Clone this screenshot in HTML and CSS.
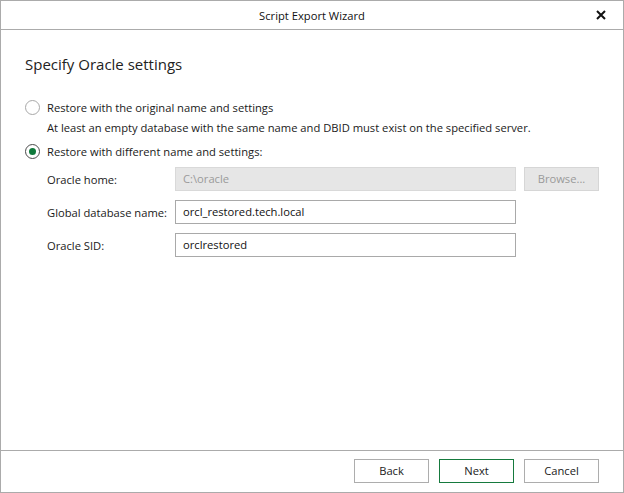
FILE: index.html
```html
<!DOCTYPE html>
<html lang="en">
<head>
  <meta charset="UTF-8" />
  <title>Script Export Wizard</title>
  <link rel="stylesheet" href="styles.css">
</head>
<body>
  <div class="window">
    <div class="titlebar">
      <span class="title">Script Export Wizard</span>
      <span class="close">
        <svg width="10" height="10" viewBox="0 0 10 10"><path d="M1 1 L9 9 M9 1 L1 9" stroke="#111" stroke-width="2"/></svg>
      </span>
    </div>

    <div class="content">
      <h1>Specify Oracle settings</h1>

      <div class="option">
        <span class="radio"></span>
        <span>Restore with the original name and settings</span>
      </div>
      <div class="note">At least an empty database with the same name and DBID must exist on the specified server.</div>

      <div class="option">
        <span class="radio checked"></span>
        <span>Restore with different name and settings:</span>
      </div>

      <div class="fields">
        <label>Oracle home:</label>
        <div class="input disabled">C:\oracle</div>
        <div class="button disabled">Browse...</div>

        <label>Global database name:</label>
        <div class="input">orcl_restored.tech.local</div>
        <div></div>

        <label>Oracle SID:</label>
        <div class="input">orclrestored</div>
        <div></div>
      </div>
    </div>

    <div class="footer">
      <div class="button">Back</div>
      <div class="button primary">Next</div>
      <div class="button">Cancel</div>
    </div>
  </div>
</body>
</html>
```

FILE: styles.css
```css
body {
  margin: 0;
  font-family: "Open Sans", "Noto Sans", sans-serif;
  font-size: 11.2px;
  color: #1a1a1a;
  background: #fff;
}
.window {
  width: 624px;
  height: 493px;
  box-sizing: border-box;
  border: 1px solid #ababab;
  display: flex;
  flex-direction: column;
}
.titlebar {
  height: 28px;
  border-bottom: 1px solid #ababab;
  display: flex;
  align-items: center;
  justify-content: center;
  position: relative;
}
.title {
  color: #111;
}
.close {
  position: absolute;
  right: 17px;
  top: 9px;
  line-height: 0;
}
.content {
  flex: 1;
  padding: 0 24px;
}
h1 {
  font-size: 15px;
  font-weight: normal;
  margin: 23px 0 24px;
  color: #222;
  line-height: 22px;
}
.option {
  display: flex;
  align-items: center;
  gap: 7px;
  height: 16px;
}
.radio {
  width: 13px;
  height: 13px;
  border: 1px solid #a8a8a8;
  border-radius: 50%;
  position: relative;
}
.radio.checked {
  border-color: #4a4a4a;
}
.radio.checked::after {
  content: "";
  position: absolute;
  left: 3px;
  top: 3px;
  width: 7px;
  height: 7px;
  border-radius: 50%;
  background: #0f7a3c;
}
.note {
  margin: 5px 0 7px 22px;
  line-height: 16px;
}
.fields {
  display: grid;
  grid-template-columns: 120px 341px 75px;
  column-gap: 8px;
  row-gap: 9px;
  margin: 8px 0 0 22px;
  align-items: center;
}
.input {
  height: 24px;
  box-sizing: border-box;
  border: 1px solid #a9a9a9;
  padding: 0 7px;
  line-height: 22px;
  color: #111;
}
.input.disabled {
  background: #e6e6e6;
  border-color: #d9d9d9;
  color: #9a9a9a;
}
.button {
  height: 24px;
  box-sizing: border-box;
  border: 1px solid #adadad;
  line-height: 22px;
  text-align: center;
  width: 75px;
}
.button.disabled {
  background: #e6e6e6;
  border-color: #d6d6d6;
  color: #9a9a9a;
}
.button.primary {
  border-color: #167a3e;
}
.footer {
  border-top: 1px solid #ababab;
  display: flex;
  justify-content: flex-end;
  gap: 10px;
  padding: 8px 24px 9px 0;
}
```
